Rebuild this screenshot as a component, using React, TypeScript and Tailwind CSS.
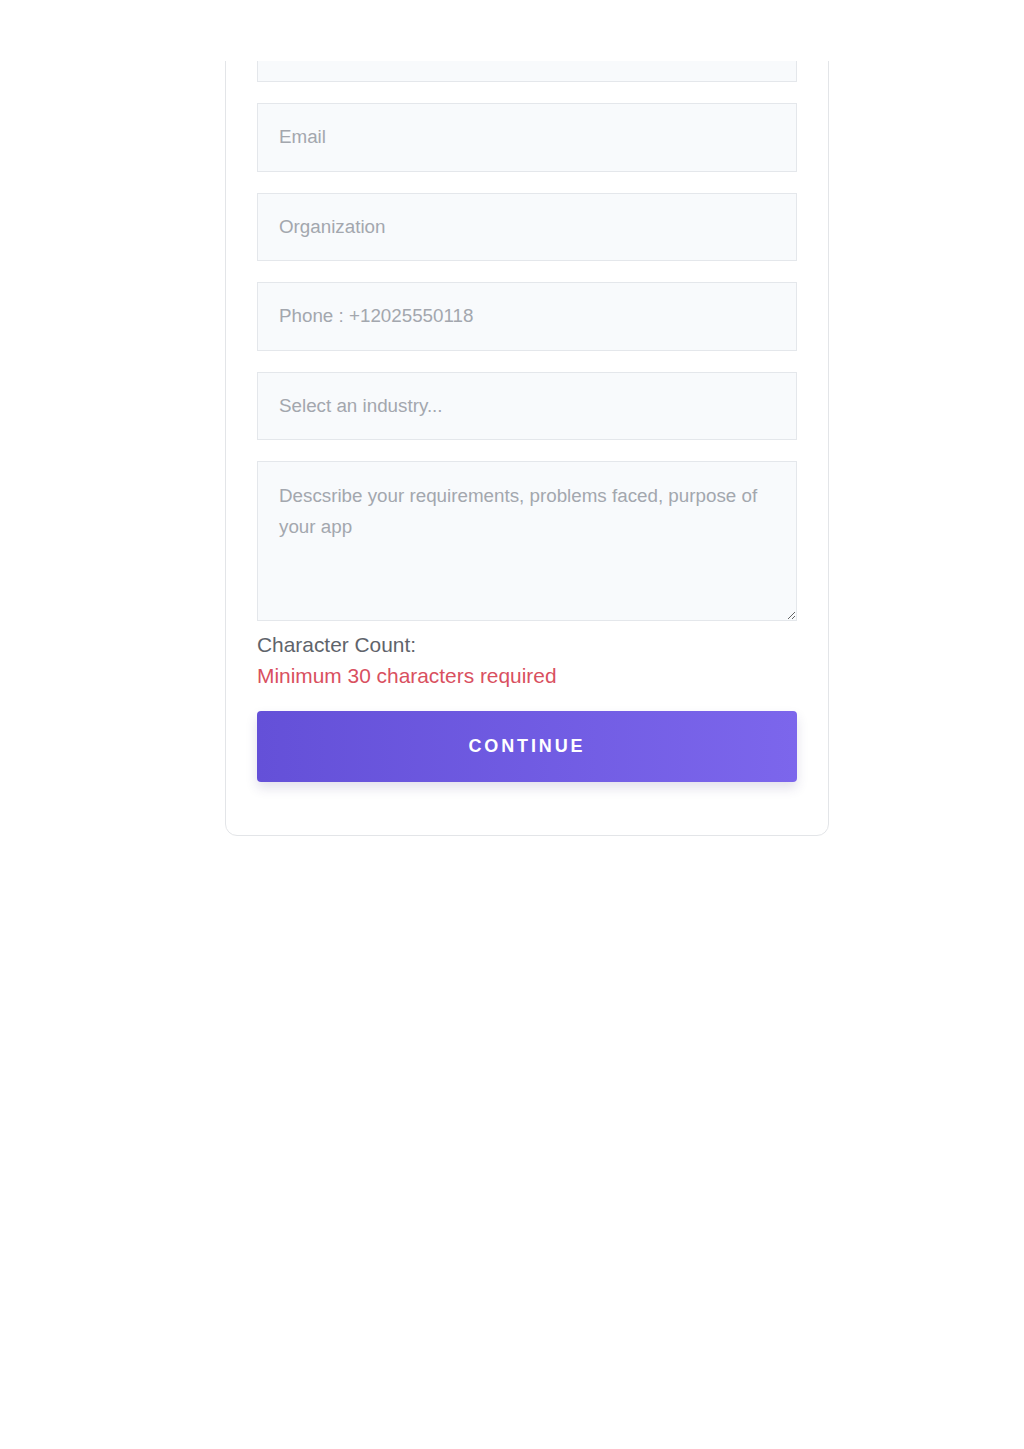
import { useState } from 'react';

const FIELDS = ['Email', 'Organization', 'Phone : +12025550118', 'Select an industry...'];

const inputCls =
  'w-full h-[68.5px] px-[21px] bg-[#f8fafc] border border-[#e4e7eb] text-[18.8px] text-[#374151] placeholder:text-[#a3a7ae] outline-none';

export default function App() {
  const [desc, setDesc] = useState('');

  return (
    <div className="min-h-[1449px] bg-white" style={{ fontFamily: '"Liberation Sans", Arial, sans-serif' }}>
      {/* top of the card is scrolled out of view */}
      <div className="pt-[61px]">
        <div className="overflow-hidden w-[604px] ml-[225px] pb-[2px]">
          <div className="-mt-[80.5px] border border-[#e3e5e8] rounded-[12px] px-[31px] pt-[32px] pb-[53px] bg-white">
            <div className="flex flex-col gap-[21px]">
              <input className={inputCls} placeholder="Name" />
              {FIELDS.map((f) => (
                <input key={f} className={inputCls} placeholder={f} />
              ))}
              <textarea
                value={desc}
                onChange={(e) => setDesc(e.target.value)}
                className="w-full h-[160px] px-[21px] pt-[18px] bg-[#f8fafc] border border-[#e4e7eb] text-[18.8px] leading-[31px] text-[#374151] placeholder:text-[#a3a7ae] outline-none resize-y"
                placeholder="Descsribe your requirements, problems faced, purpose of your app"
              />
            </div>

            <div className="mt-[8px] text-[20.9px] leading-[31px]">
              <p className="text-[#5f646b]">Character Count:{desc.length > 0 ? ` ${desc.length}` : ''}</p>
              <p className="text-[#d9505f]">Minimum 30 characters required</p>
            </div>

            <button className="mt-[20px] w-full h-[71px] rounded-[4px] bg-gradient-to-r from-[#6450d8] to-[#7c66ec] text-white text-[18px] font-semibold tracking-[0.16em] shadow-[0_6px_12px_rgba(60,50,120,0.15)]">
              CONTINUE
            </button>
          </div>
        </div>
      </div>
    </div>
  );
}
